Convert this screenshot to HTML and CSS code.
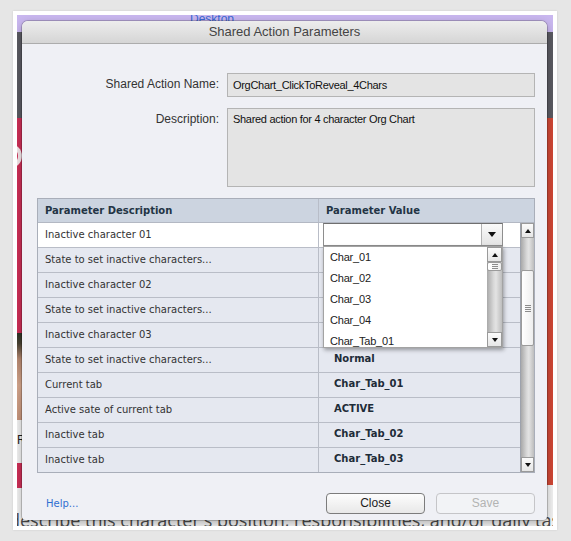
FILE: index.html
```html
<!DOCTYPE html>
<html>
<head>
<meta charset="utf-8">
<link rel="stylesheet" href="styles.css">
</head>
<body>
<div class="frame">
  <div class="desktop">
    <div class="bg-purple"><span class="bg-desktop-link">Desktop</span></div>
    <div class="bg-dark"></div>
    <div class="bg-left-red"><span class="bg-blob"></span></div>
    <div class="bg-photo"></div>
    <div class="bg-caption">R.</div>
    <div class="bg-left-red2"></div>
    <div class="bg-right-red"></div>
    <div class="bg-text">describe this character's position, responsibilities, and/or daily tasks</div>

    <div class="dialog">
      <div class="titlebar">Shared Action Parameters</div>
      <div class="dlg-body">
        <div class="form">
          <div class="lbl">Shared Action Name:</div>
          <div class="field">OrgChart_ClickToReveal_4Chars</div>
          <div class="lbl">Description:</div>
          <div class="field area">Shared action for 4 character Org Chart</div>
        </div>

        <div class="grid">
          <div class="grid-head">
            <div class="hcell c1">Parameter Description</div>
            <div class="hcell c2">Parameter Value</div>
          </div>
          <div class="grid-body">
            <div class="rows">
              <div class="row sel">
                <div class="cell c1">Inactive character 01</div>
                <div class="cell c2 combo-cell">
                  <div class="combo">
                    <div class="combo-text"></div>
                    <div class="combo-btn"><span class="tri-down"></span></div>
                    <div class="dropdown">
                      <div class="dd-items">
                        <div class="dd-item">Char_01</div>
                        <div class="dd-item">Char_02</div>
                        <div class="dd-item">Char_03</div>
                        <div class="dd-item">Char_04</div>
                        <div class="dd-item">Char_Tab_01</div>
                      </div>
                      <div class="sb sb-small">
                        <div class="sb-arrow"><span class="tri-up"></span></div>
                        <div class="sb-track">
                          <div class="sb-thumb small"><span class="grip"></span></div>
                        </div>
                        <div class="sb-arrow"><span class="tri-down sm"></span></div>
                      </div>
                    </div>
                  </div>
                </div>
              </div>
              <div class="row"><div class="cell c1">State to set inactive characters...</div><div class="cell c2"></div></div>
              <div class="row"><div class="cell c1">Inactive character 02</div><div class="cell c2"></div></div>
              <div class="row"><div class="cell c1">State to set inactive characters...</div><div class="cell c2"></div></div>
              <div class="row"><div class="cell c1">Inactive character 03</div><div class="cell c2"></div></div>
              <div class="row"><div class="cell c1">State to set inactive characters...</div><div class="cell c2 val">Normal</div></div>
              <div class="row"><div class="cell c1">Current tab</div><div class="cell c2 val">Char_Tab_01</div></div>
              <div class="row"><div class="cell c1">Active sate of current tab</div><div class="cell c2 val">ACTIVE</div></div>
              <div class="row"><div class="cell c1">Inactive tab</div><div class="cell c2 val">Char_Tab_02</div></div>
              <div class="row last"><div class="cell c1">Inactive tab</div><div class="cell c2 val">Char_Tab_03</div></div>
            </div>
            <div class="sb sb-table">
              <div class="sb-arrow"><span class="tri-up"></span></div>
              <div class="sb-track">
                <div class="sb-thumb big"><span class="grip"></span></div>
              </div>
              <div class="sb-arrow"><span class="tri-down sm"></span></div>
            </div>
          </div>
        </div>

        <div class="footer">
          <a class="help">Help...</a>
          <div class="buttons">
            <div class="btn">Close</div>
            <div class="btn disabled">Save</div>
          </div>
        </div>
      </div>
    </div>
  </div>
</div>
</body>
</html>
```
FILE: styles.css
```css
* { box-sizing: border-box; }
html, body { margin: 0; padding: 0; }
body {
  width: 571px;
  height: 541px;
  overflow: hidden;
  background: #e6e6e6;
  font-family: "Liberation Sans", Arial, sans-serif;
}
.frame {
  margin: 11px 0 0 13px;
  width: 544px;
  height: 519px;
  padding: 4px;
  background: #ffffff;
  box-shadow: 0 0 2px rgba(0,0,0,0.12);
}
.desktop {
  position: relative;
  width: 536px;
  height: 511px;
  overflow: hidden;
  background: #f2f2f2;
}
/* background window (canvas content behind the dialog) */
.bg-purple {
  position: absolute; left: 0; top: 0; width: 536px; height: 17px;
  background: #c9b7ef;
}
.bg-desktop-link {
  position: absolute; left: 173px; top: -3px;
  font: 12px/14px "Liberation Sans", Arial, sans-serif;
  color: #3a67d4;
}
.bg-dark {
  position: absolute; left: 0; top: 17px; width: 536px; height: 86px;
  background: #5b5b63;
}
.bg-left-red {
  position: absolute; left: 0; top: 103px; width: 8px; height: 215px;
  background: #cd2f57;
}
.bg-blob {
  position: absolute; left: -10px; top: 26px; width: 15px; height: 24px;
  border: 4px solid #f4e7ea; border-radius: 0 12px 12px 0;
}
.bg-photo {
  position: absolute; left: 0; top: 318px; width: 8px; height: 87px;
  background: linear-gradient(#2f3326 0, #4a4334 12%, #b88a72 30%, #d7a88e 60%, #c7957c 100%);
}
.bg-caption {
  position: absolute; left: 0; top: 405px; width: 8px; height: 43px;
  background: #f1f1f1;
  font: 12px/40px "Liberation Sans", Arial, sans-serif;
  color: #222;
}
.bg-left-red2 {
  position: absolute; left: 0; top: 448px; width: 8px; height: 25px;
  background: #cd2f57;
}
.bg-right-red {
  position: absolute; left: 528px; top: 103px; width: 8px; height: 367px;
  background: #d04836;
}
.bg-text {
  position: absolute; left: -8px; top: 495px;
  white-space: nowrap;
  font: 18px/20px "Open Sans", "Liberation Sans", sans-serif;
  color: #4a4a4a;
}

/* dialog */
.dialog {
  position: absolute; left: 5px; top: 6px;
  width: 525px; height: 499px;
  background: #eff0f5;
  border-radius: 6px 6px 4px 4px;
  box-shadow: 0 0 0 1px rgba(0,0,0,0.18), 0 3px 10px rgba(0,0,0,0.28);
}
.titlebar {
  height: 23px;
  border-radius: 6px 6px 0 0;
  border-bottom: 1px solid #acacac;
  background: linear-gradient(#ededed, #d5d5d5);
  text-align: center;
  font: 13px/22px "Liberation Sans", Arial, sans-serif;
  color: #444;
}
.dlg-body {
  padding: 29px 12px 0 0;
}
.form {
  display: grid;
  grid-template-columns: 197px 1fr;
  column-gap: 8px;
  row-gap: 11px;
}
.lbl {
  text-align: right;
  font-size: 12px;
  line-height: 18px;
  padding-top: 2px;
  color: #333;
}
.field {
  height: 24px;
  background: #e4e4e4;
  border: 1px solid #b4b4b4;
  padding: 0 5px;
  font-size: 11px;
  letter-spacing: -0.3px;
  line-height: 22px;
  color: #111;
}
.field.area {
  height: 79px;
  line-height: 14px;
  padding-top: 3px;
}

/* parameter grid */
.grid {
  margin: 11px 0 0 15px;
  border: 1px solid #a9aeb9;
  font-family: "DejaVu Sans", Verdana, sans-serif;
  font-size: 10px;
  color: #333;
}
.grid-head {
  display: grid;
  grid-template-columns: 281px 1fr;
  height: 24px;
  background: #ccd4e0;
  border-bottom: 1px solid #b3b8c3;
}
.hcell {
  font-weight: bold;
  color: #233445;
  padding-left: 7px;
  line-height: 23px;
}
.hcell.c1 { border-right: 1px solid #b8bdc8; }
.grid-body {
  display: flex;
}
.rows { width: 482px; }
.row {
  display: grid;
  grid-template-columns: 281px 1fr;
  height: 25px;
  background: #e5e8f0;
  border-bottom: 1px solid #b9bdc7;
}
.row.last { border-bottom: 0; height: 24px; }
.row.sel { background: #ffffff; }
.cell { line-height: 24px; white-space: nowrap; }
.cell.c1 { padding-left: 7px; border-right: 1px solid #b9bdc7; }
.cell.val { padding-left: 15px; font-weight: bold; color: #1e2c38; line-height: 22px; }
.combo-cell { position: relative; }
.combo {
  position: absolute; left: 4px; top: 0;
  width: 180px; height: 23px;
  display: flex;
  background: #fff;
  border: 1px solid #8e8e8e;
  border-top-color: #6f6f6f;
}
.combo-text { flex: 1; }
.combo-btn {
  width: 21px;
  border-left: 1px solid #b2b2b2;
  background: linear-gradient(#fafafa, #e4e4e4);
  display: flex; align-items: center; justify-content: center;
}
.tri-down {
  width: 0; height: 0;
  border-left: 4px solid transparent;
  border-right: 4px solid transparent;
  border-top: 5px solid #111;
}
.tri-down.sm {
  border-left-width: 3px; border-right-width: 3px; border-top-width: 4px;
}
.tri-up {
  width: 0; height: 0;
  border-left: 3px solid transparent;
  border-right: 3px solid transparent;
  border-bottom: 4px solid #111;
}
.dropdown {
  position: absolute; left: -1px; top: 22px;
  width: 180px; height: 102px;
  display: flex;
  background: #fff;
  border: 1px solid #a3a3a3;
  box-shadow: 1px 2px 4px rgba(0,0,0,0.35);
  z-index: 2;
  overflow: hidden;
}
.dd-items { flex: 1; overflow: hidden; }
.dd-item {
  height: 21px;
  padding-left: 6px;
  font: 11px/20px "Liberation Sans", Arial, sans-serif;
  letter-spacing: -0.2px;
  color: #222;
}
/* scrollbars */
.sb {
  display: flex;
  flex-direction: column;
}
.sb-table { width: 14px; border-left: 1px solid #9da2ac; }
.sb-small { width: 15px; }
.sb-arrow {
  height: 15px;
  flex: none;
  background: linear-gradient(#fbfbfb, #e6e6e6);
  border: 1px solid #9a9a9a;
  display: flex; align-items: center; justify-content: center;
}
.sb-track {
  flex: 1;
  position: relative;
  background: linear-gradient(to right, #a9a9a9, #d9d9d9 45%, #e3e3e3 60%, #bdbdbd);
}
.sb-thumb {
  position: absolute; left: 0; right: 0;
  background: linear-gradient(to right, #ffffff, #eeeeee);
  border: 1px solid #9b9b9b;
  border-radius: 2px;
  display: flex; align-items: center; justify-content: center;
}
.sb-thumb.big { top: 32px; height: 76px; }
.sb-thumb.small { top: 0; height: 9px; }
.grip {
  width: 6px; height: 7px;
  background: repeating-linear-gradient(#8c8c8c 0 1px, transparent 1px 2px);
}
.sb-thumb.small .grip { height: 5px; }

/* footer */
.footer {
  margin-top: 20px;
  padding-left: 24px;
  display: flex;
  align-items: center;
  justify-content: space-between;
}
.help {
  font: 10px/14px "DejaVu Sans", Verdana, sans-serif;
  color: #2f6fd1;
}
.buttons { display: flex; gap: 11px; }
.btn {
  width: 99px; height: 21px;
  border: 1px solid #7c7c7c;
  border-radius: 4px;
  background: linear-gradient(#fdfdfd, #e8e8e8);
  text-align: center;
  font-size: 12px;
  line-height: 19px;
  color: #1d1d1d;
}
.btn.disabled {
  border-color: #c5c5c8;
  background: #f2f3f6;
  color: #b3b3b3;
}
```
